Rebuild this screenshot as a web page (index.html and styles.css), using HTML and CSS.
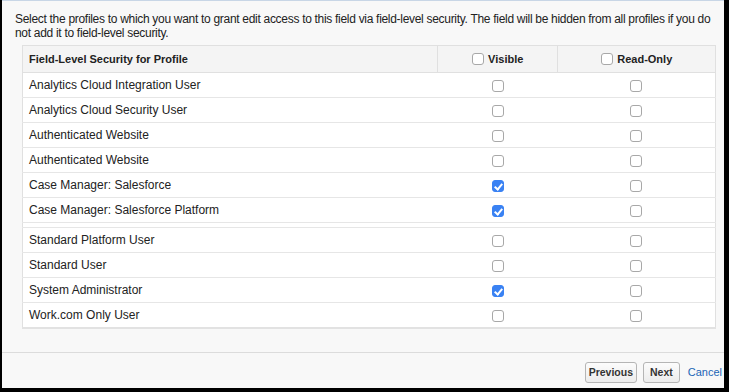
FILE: index.html
```html
<!DOCTYPE html>
<html lang="en">
<head>
    <meta charset="UTF-8">
    <title>Field-Level Security</title>
    <link rel="stylesheet" href="styles.css">
</head>
<body>
    <div class="dialog">
        <div class="content">
            <p class="intro">Select the profiles to which you want to grant edit access to this field via field-level security. The field will be hidden from all profiles if you do not add it to field-level security.</p>
            <table class="fls">
                <thead>
                    <tr>
                        <th class="name">Field-Level Security for Profile</th>
                        <th class="col"><span class="box"></span>Visible</th>
                        <th class="col"><span class="box"></span>Read-Only</th>
                    </tr>
                </thead>
                <tbody>
                    <tr><td>Analytics Cloud Integration User</td><td class="col"><span class="box"></span></td><td class="col"><span class="box"></span></td></tr>
                    <tr><td>Analytics Cloud Security User</td><td class="col"><span class="box"></span></td><td class="col"><span class="box"></span></td></tr>
                    <tr><td>Authenticated Website</td><td class="col"><span class="box"></span></td><td class="col"><span class="box"></span></td></tr>
                    <tr><td>Authenticated Website</td><td class="col"><span class="box"></span></td><td class="col"><span class="box"></span></td></tr>
                    <tr><td>Case Manager: Salesforce</td><td class="col"><span class="box checked"></span></td><td class="col"><span class="box"></span></td></tr>
                    <tr><td>Case Manager: Salesforce Platform</td><td class="col"><span class="box checked"></span></td><td class="col"><span class="box"></span></td></tr>
                    <tr class="spacer"><td></td><td></td><td></td></tr>
                    <tr><td>Standard Platform User</td><td class="col"><span class="box"></span></td><td class="col"><span class="box"></span></td></tr>
                    <tr><td>Standard User</td><td class="col"><span class="box"></span></td><td class="col"><span class="box"></span></td></tr>
                    <tr><td>System Administrator</td><td class="col"><span class="box checked"></span></td><td class="col"><span class="box"></span></td></tr>
                    <tr><td>Work.com Only User</td><td class="col"><span class="box"></span></td><td class="col"><span class="box"></span></td></tr>
                </tbody>
            </table>
        </div>
        <div class="footer">
            <button class="btn">Previous</button>
            <button class="btn wide">Next</button>
            <a class="cancel" href="#">Cancel</a>
        </div>
    </div>
</body>
</html>
```

FILE: styles.css
```css
html, body {
    margin: 0;
    background: #000;
}

body {
    font-family: "Liberation Sans", Arial, sans-serif;
    font-size: 12px;
    color: #222;
}

.dialog {
    margin: 0 5px 0 2px;
    height: 387px;
    background: #f8f8f8;
    border-top: 1px solid #c8d6e6;
    display: flex;
    flex-direction: column;
}

.content {
    padding: 11px 6px 0 13px;
    flex: 1;
}

.intro {
    margin: 0;
    line-height: 14px;
    letter-spacing: -0.3px;
}

.fls {
    margin: 5px 0 0 7px;
    width: 694px;
    border-collapse: collapse;
    background: #fff;
    border: 1px solid #e0e0e0;
    border-bottom: 2px solid #e2e2e2;
}

.fls th {
    height: 26px;
    padding: 0 6px;
    background: #f4f4f4;
    border: 1px solid #e0e0e0;
    font-size: 11px;
    font-weight: bold;
    text-align: left;
}

.fls th.name {
    width: 402px;
}

.fls th.col {
    text-align: center;
}

.fls th .box {
    margin-right: 4px;
    vertical-align: -2px;
}

.fls td {
    height: 24px;
    padding: 0 6px;
    border-bottom: 1px solid #e6e6e6;
}

.fls td.col {
    text-align: center;
}

.fls td.col .box {
    vertical-align: -3px;
}

.fls .spacer td {
    height: 4px;
    padding: 0;
}

.box {
    display: inline-block;
    width: 10px;
    height: 10px;
    border: 1px solid #a8a8a8;
    border-radius: 3px;
    background: #fff;
    position: relative;
}

.box.checked {
    background: #3a82f3;
    border-color: #3a82f3;
}

.box.checked::after {
    content: "";
    position: absolute;
    left: 3px;
    top: 1px;
    width: 3px;
    height: 6px;
    border: solid #fff;
    border-width: 0 2px 2px 0;
    transform: rotate(40deg);
}

.footer {
    border-top: 1px solid #dcdcdc;
    height: 36px;
    display: flex;
    justify-content: flex-end;
    align-items: center;
    gap: 6px;
    padding: 3px 2px 0 0;
    box-sizing: border-box;
}

.btn {
    font-family: "Liberation Sans", Arial, sans-serif;
    font-size: 10.5px;
    font-weight: bold;
    color: #333;
    height: 21px;
    padding: 0 3px;
    background: linear-gradient(#fcfcfc, #ececec);
    border: 1px solid #b5b5b5;
    border-radius: 3px;
}

.btn.wide {
    padding: 0 6px;
}

.cancel {
    color: #1a64b6;
    text-decoration: none;
    font-size: 11px;
    margin-left: 2px;
}
```
